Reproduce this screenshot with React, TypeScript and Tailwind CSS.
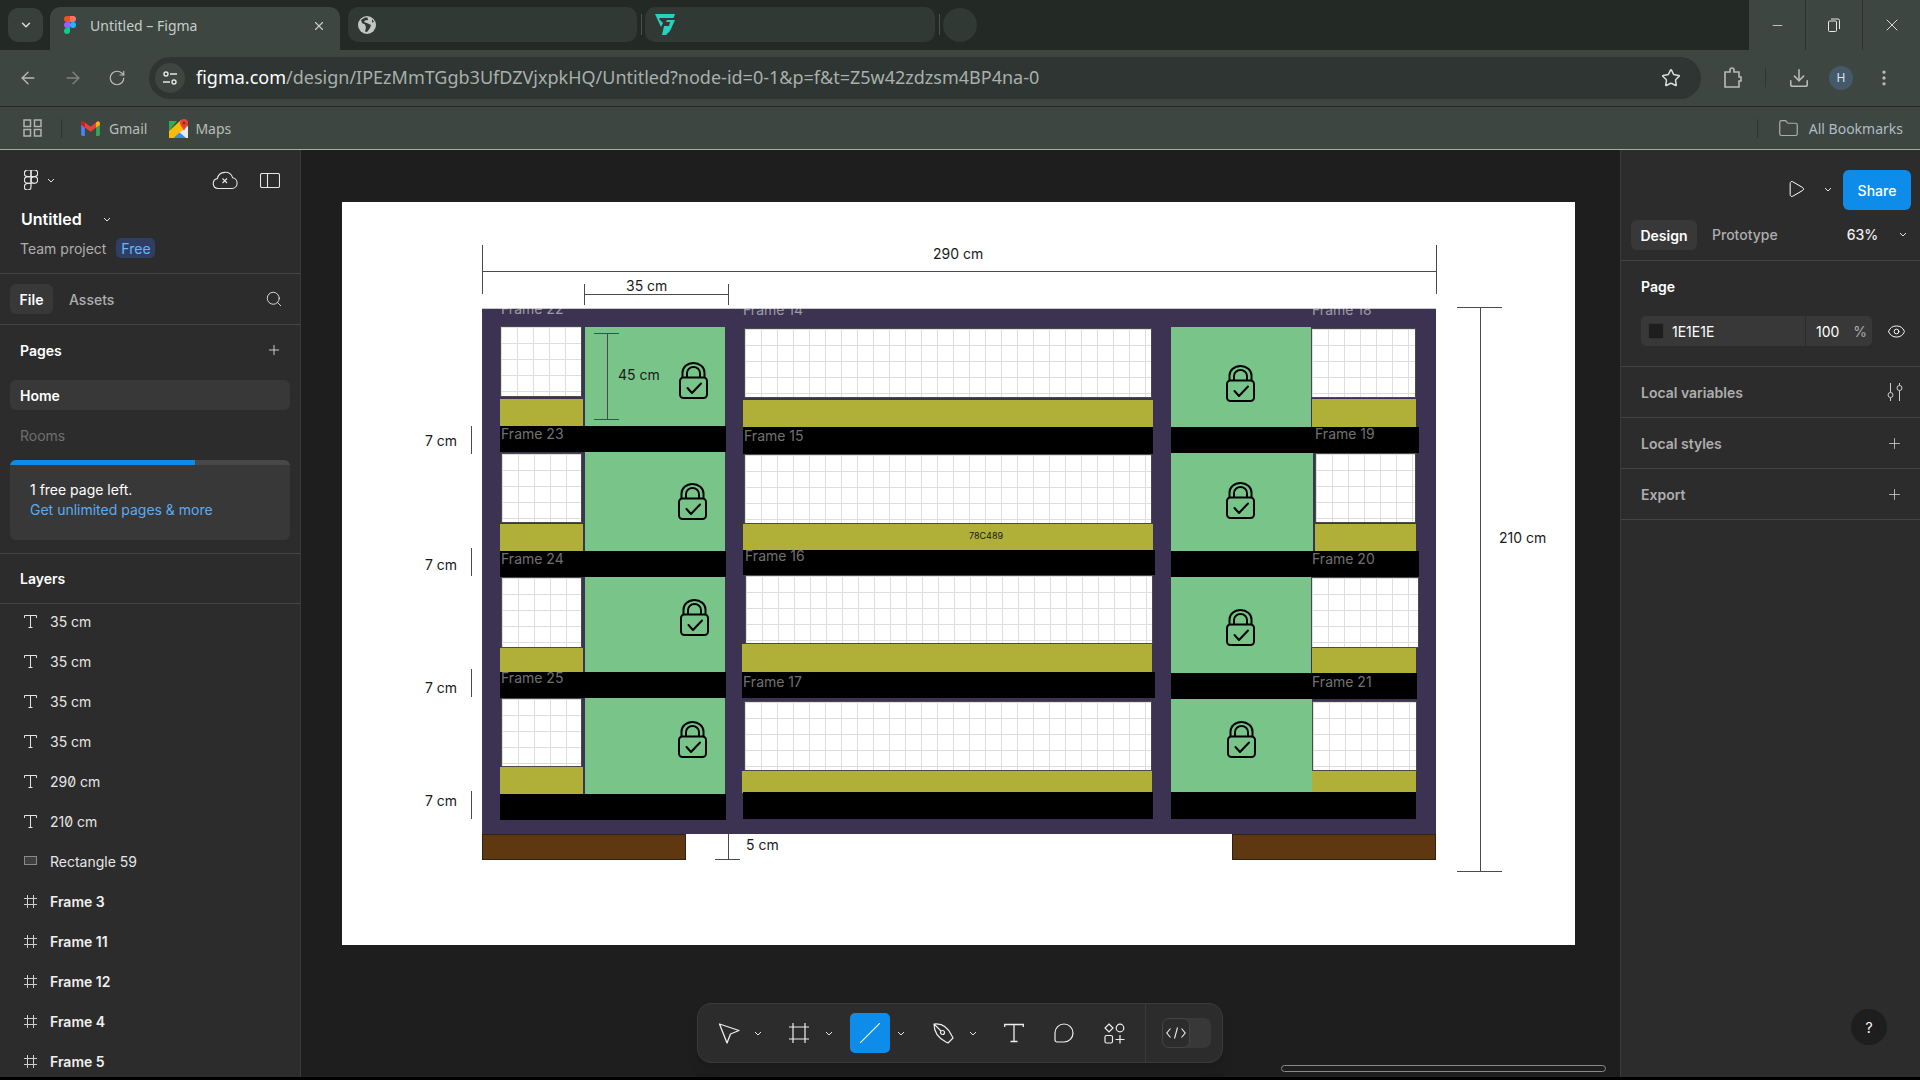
import React from "react";
import {
  ArrowLeft,
  ArrowRight,
  ChevronDown,
  Download,
  EllipsisVertical,
  Eye,
  Folder,
  Minus,
  Play,
  Plus,
  RotateCw,
  Search,
  Star,
  X,
} from "lucide-react";

// the drawing on the canvas is a free layout, so boxes keep the page coordinates of the picture
const BOARD_X = 342;
const BOARD_Y = 203;

type R = [number, number, number, number];

const greens: R[] = [
  [585, 328, 140, 99],
  [585, 453, 140, 99],
  [585, 578, 140, 95],
  [585, 699, 140, 96],
  [1171, 328, 140, 100],
  [1171, 454, 142, 98],
  [1171, 578, 140, 96],
  [1171, 700, 141, 94],
];

const whites: R[] = [
  [500, 327, 82, 71],
  [501, 454, 81, 70],
  [501, 578, 81, 71],
  [501, 699, 81, 69],
  [744, 329, 408, 70],
  [744, 455, 408, 70],
  [745, 576, 408, 69],
  [744, 702, 408, 70],
  [1311, 329, 105, 70],
  [1315, 454, 101, 70],
  [1311, 578, 108, 71],
  [1312, 702, 105, 70],
];

const olives: R[] = [
  [500, 400, 83, 27],
  [500, 525, 83, 28],
  [500, 649, 83, 24],
  [500, 768, 83, 27],
  [743, 401, 410, 27],
  [743, 525, 410, 26],
  [742, 645, 410, 28],
  [742, 772, 410, 22],
  [1312, 400, 104, 28],
  [1315, 525, 101, 27],
  [1312, 649, 104, 25],
  [1312, 772, 104, 22],
];

const blacks: R[] = [
  [500, 427, 226, 26],
  [500, 552, 226, 26],
  [500, 673, 226, 26],
  [500, 795, 226, 26],
  [743, 428, 410, 27],
  [743, 551, 412, 25],
  [742, 673, 413, 26],
  [743, 793, 410, 27],
  [1171, 428, 248, 26],
  [1171, 552, 248, 26],
  [1171, 674, 246, 26],
  [1171, 793, 245, 27],
];

const locks: [number, number][] = [
  [679, 363],
  [678, 484],
  [680, 600],
  [678, 722],
  [1226, 366],
  [1226, 483],
  [1226, 610],
  [1227, 722],
];

const frameLabels: [string, number, number][] = [
  ["Frame 22", 501, 310],
  ["Frame 14", 743, 311],
  ["Frame 18", 1312, 311],
  ["Frame 23", 501, 435],
  ["Frame 24", 501, 560],
  ["Frame 25", 501, 679],
  ["Frame 15", 744, 437],
  ["Frame 16", 745, 557],
  ["Frame 17", 743, 683],
  ["Frame 19", 1315, 435],
  ["Frame 20", 1312, 560],
  ["Frame 21", 1312, 683],
];

const dimLines: R[] = [
  [482, 272, 954, 1],
  [482, 246, 1, 49],
  [1436, 246, 1, 49],
  [584, 295, 144, 1],
  [584, 285, 1, 21],
  [728, 285, 1, 21],
  [607, 334, 1, 86],
  [594, 334, 25, 1],
  [594, 420, 25, 1],
  [471, 427, 1, 28],
  [471, 549, 1, 28],
  [471, 670, 1, 28],
  [471, 792, 1, 28],
  [728, 835, 1, 25],
  [715, 860, 25, 1],
  [1480, 308, 1, 565],
  [1457, 308, 45, 1],
  [1457, 872, 45, 1],
];

const dimLabels: [string, number, number][] = [
  ["290 cm", 933, 255],
  ["35 cm", 626, 287],
  ["45 cm", 618, 376],
  ["7 cm", 425, 442],
  ["7 cm", 425, 566],
  ["7 cm", 425, 689],
  ["7 cm", 425, 802],
  ["5 cm", 746, 846],
  ["210 cm", 1499, 539],
];

const layers = [
  { kind: "text", name: "35 cm" },
  { kind: "text", name: "35 cm" },
  { kind: "text", name: "35 cm" },
  { kind: "text", name: "35 cm" },
  { kind: "text", name: "290 cm" },
  { kind: "text", name: "210 cm" },
  { kind: "rect", name: "Rectangle 59" },
  { kind: "frame", name: "Frame 3" },
  { kind: "frame", name: "Frame 11" },
  { kind: "frame", name: "Frame 12" },
  { kind: "frame", name: "Frame 4" },
  { kind: "frame", name: "Frame 5" },
];

const Box = ({ r, className }: { r: R; className: string }) => (
  <div
    className={`absolute ${className}`}
    style={{ left: r[0] - BOARD_X, top: r[1] - BOARD_Y, width: r[2], height: r[3] }}
  />
);

const Label = ({ text, x, cy, className }: { text: string; x: number; cy: number; className: string }) => (
  <span
    className={`absolute h-5 whitespace-nowrap text-[14px] leading-5 ${className}`}
    style={{ left: x - BOARD_X, top: cy - 10 - BOARD_Y }}
  >
    {text}
  </span>
);

const Lock = ({ x, y }: { x: number; y: number }) => (
  <svg
    className="absolute"
    style={{ left: x - BOARD_X, top: y - BOARD_Y }}
    width="29"
    height="37"
    viewBox="0 0 29 37"
    fill="none"
    stroke="#000"
    strokeWidth="2"
    strokeLinejoin="round"
    strokeLinecap="round"
  >
    <path d="M3.5 15V10.5a11 9.5 0 0 1 22 0V15" />
    <path d="M8 15V11a6.5 6 0 0 1 13 0v4" />
    <rect x="1" y="15.5" width="27" height="20.5" rx="3.5" />
    <path d="M8.5 26l4.5 5 9-9.5" />
  </svg>
);

const Mini = () => (
  <svg width="8" height="5" viewBox="0 0 8 5" fill="none" stroke="#e6e6e6" strokeWidth="1">
    <path d="M1 1l3 3 3-3" />
  </svg>
);

const FigmaMark = ({ size = 20 }: { size?: number }) => (
  <svg width={size * 0.7} height={size} viewBox="0 0 38 57" fill="none" stroke="#e6e6e6" strokeWidth="3.5">
    <path d="M19 28.5a9.5 9.5 0 1 1 19 0 9.5 9.5 0 0 1-19 0z" />
    <path d="M0 47.5A9.5 9.5 0 0 1 9.5 38H19v9.5a9.5 9.5 0 1 1-19 0z" />
    <path d="M19 0v19h9.5a9.5 9.5 0 1 0 0-19H19z" />
    <path d="M0 9.5A9.5 9.5 0 0 0 9.5 19H19V0H9.5A9.5 9.5 0 0 0 0 9.5z" />
    <path d="M0 28.5A9.5 9.5 0 0 0 9.5 38H19V19H9.5A9.5 9.5 0 0 0 0 28.5z" />
  </svg>
);

const FigmaFavicon = () => (
  <svg width="12" height="18" viewBox="0 0 38 57">
    <path fill="#1ABCFE" d="M19 28.5a9.5 9.5 0 1 1 19 0 9.5 9.5 0 0 1-19 0z" />
    <path fill="#0ACF83" d="M0 47.5A9.5 9.5 0 0 1 9.5 38H19v9.5a9.5 9.5 0 1 1-19 0z" />
    <path fill="#FF7262" d="M19 0v19h9.5a9.5 9.5 0 1 0 0-19H19z" />
    <path fill="#F24E1E" d="M0 9.5A9.5 9.5 0 0 0 9.5 19H19V0H9.5A9.5 9.5 0 0 0 0 9.5z" />
    <path fill="#A259FF" d="M0 28.5A9.5 9.5 0 0 0 9.5 38H19V19H9.5A9.5 9.5 0 0 0 0 28.5z" />
  </svg>
);

const GlobeIcon = () => (
  <svg width="18" height="18" viewBox="0 0 18 18">
    <circle cx="9" cy="9" r="9" fill="#c3c7c4" />
    <path fill="#313935" d="M7 1.5L3 4l1 3 3 1.5 1 3-1 4 2 .5 3-4 1-3-3-1.5L6 6l1-1.5 3-.5L9.5 1.5zM14 3l2 3-2 .5z" />
  </svg>
);

const FvLogo = () => (
  <svg width="20" height="21" viewBox="0 0 20 21" fill="#23d3c0">
    <path d="M0 0h20l-1.5 4H5l-1 1 4 4-2 4z" />
    <path d="M7 21l2-9h5l1-4h-4l1-2h8l-5 11-4 4z" />
  </svg>
);

const GmailIcon = () => (
  <svg width="19" height="15" viewBox="0 0 20 16">
    <path fill="#4285F4" d="M0 3h4v13H1.5A1.5 1.5 0 0 1 0 14.500z" />
    <path fill="#34A853" d="M16 3h4v11.500a1.500 1.500 0 0 1-1.500 1.500H16z" />
    <path fill="#EA4335" d="M0 4V2.500C0 .5 2 0 3 .8L10 6l7-5.200c1-.8 3-.3 3 1.700V4l-4 3-6 4.500L4 7z" />
    <path fill="#FBBC04" d="M16 1.500l1-.7c1-.8 3-.3 3 1.700V4l-4 3z" />
    <path fill="#C5221F" d="M0 4V2.500C0 .5 2 0 3 .8l1 .7V7z" />
  </svg>
);

const MapsIcon = () => (
  <svg width="19" height="19" viewBox="0 0 19 19">
    <path fill="#34A853" d="M0 2h8L0 12z" />
    <path fill="#FBBC04" d="M0 12L12 1l7 6L5 19H0z" />
    <path fill="#4285F4" d="M5 19l5.500-5.500L17 19z" />
    <path fill="#e8eaed" d="M10.500 13.500L19 7v12h-2z" />
    <path fill="#EA4335" d="M15 0a4 4 0 0 0-4 4c0 3 3 4.500 4 8 1-3.500 4-5 4-8a4 4 0 0 0-4-4z" />
    <circle cx="15" cy="4" r="1.500" fill="#8e2a20" />
  </svg>
);

const LayerIcon = ({ kind }: { kind: string }) => {
  if (kind === "text") {
    return (
      <svg width="13" height="13" viewBox="0 0 13 13" fill="none" stroke="#e6e6e6" strokeWidth="1">
        <path d="M.5 3V.5h12V3M6.500.5v12M4.500 12.500h4" />
      </svg>
    );
  }
  if (kind === "rect") {
    return (
      <svg width="13" height="10" viewBox="0 0 13 10" fill="#3f3f3f" stroke="#8a8a8a" strokeWidth="1">
        <rect x=".5" y=".5" width="12" height="8" />
      </svg>
    );
  }
  return (
    <svg width="13" height="13" viewBox="0 0 13 13" fill="none" stroke="#cfcfcf" strokeWidth="1">
      <path d="M3.500 0v13M9.500 0v13M0 3.500h13M0 9.500h13" />
    </svg>
  );
};

const ToolChevron = ({ className }: { className: string }) => (
  <span className={className}>
    <Mini />
  </span>
);

const Toolbar = () => (
  <div className="absolute left-[396px] top-[853px] flex h-[60px] w-[526px] items-center rounded-[14px] border border-[#3a3a3a] bg-[#2c2c2c] shadow-lg">
    <svg className="ml-5" width="22" height="22" viewBox="0 0 22 22" fill="none" stroke="#eee" strokeWidth="1.300" strokeLinejoin="round">
      <path d="M1.500 2L21 8.500l-8.500 3.500L9 21z" />
    </svg>
    <ToolChevron className="ml-[14px]" />
    <svg className="ml-[27px]" width="20" height="20" viewBox="0 0 20 20" fill="none" stroke="#eee" strokeWidth="1.200">
      <path d="M4 0v20M16 0v20M0 4h20M0 16h20" />
    </svg>
    <ToolChevron className="ml-4" />
    <div className="ml-[17px] flex size-10 items-center justify-center rounded-[5px] bg-[#0d8ce9]">
      <svg width="20" height="20" viewBox="0 0 20 20" stroke="#fff" strokeWidth="1.100">
        <path d="M0 20L20 0" />
      </svg>
    </div>
    <ToolChevron className="ml-[7px]" />
    <svg className="ml-7" width="21" height="21" viewBox="0 0 21 21" fill="none" stroke="#eee" strokeWidth="1.200" strokeLinejoin="round">
      <path d="M1 1c8-1 14 3 18 12l1 2-5 5-2-1C5 15 1 9 1 1zM1 1l7 7" />
      <circle cx="9.500" cy="9.500" r="2" />
    </svg>
    <ToolChevron className="ml-[15px]" />
    <svg className="ml-[27px]" width="20" height="20" viewBox="0 0 20 20" fill="none" stroke="#eee" strokeWidth="1.300">
      <path d="M.7 4V1.500h18.600V4M10 1.500v17M6.500 18.500h7" />
    </svg>
    <svg className="ml-[30px]" width="20" height="20" viewBox="0 0 20 20" fill="none" stroke="#eee" strokeWidth="1.200">
      <path d="M10 1a9 9 0 0 1 0 18H3a2 2 0 0 1-2-2v-7a9 9 0 0 1 9-9z" />
    </svg>
    <svg className="ml-[30px]" width="21" height="21" viewBox="0 0 21 21" fill="none" stroke="#eee" strokeWidth="1.200">
      <path d="M5 1l4 4-4 4-4-4z" />
      <circle cx="16" cy="5" r="3.800" />
      <rect x="1" y="12.500" width="7.500" height="7.500" rx="1.500" />
      <path d="M16 12v8.500M11.500 16.500h9" />
    </svg>
    <div className="ml-5 h-full w-px bg-[#3a3a3a]" />
    <div className="ml-4 flex h-[30px] w-[49px] rounded-[7px] bg-[#383838]">
      <div className="flex h-[30px] w-7 items-center justify-center rounded-[7px] border border-[#444] bg-[#2c2c2c]">
        <svg width="20" height="12" viewBox="0 0 20 12" fill="none" stroke="#eee" strokeWidth="1.100">
          <path d="M4.500 1.500L.8 6l3.700 4.500M15.500 1.500L19.200 6l-3.700 4.500M11.500.5L8.500 11.500" />
        </svg>
      </div>
    </div>
  </div>
);

const Canvas = () => (
  <main className="relative min-w-0 flex-1 overflow-hidden bg-[#1e1e1e]">
    {/* white frame with the wardrobe sketch */}
    <div className="absolute left-[41px] top-[52px] h-[743px] w-[1233px] bg-white text-black">
      <Box r={[482, 309, 954, 526]} className="bg-[#3b3351] border-t border-[#c8c8c8]" />
      <Box r={[482, 835, 204, 26]} className="bg-[#5f3711] border border-[#2e2116]" />
      <Box r={[1232, 835, 204, 26]} className="bg-[#5f3711] border border-[#2e2116]" />
      {greens.map((r, i) => (
        <Box key={i} r={r} className="bg-[#78c489]" />
      ))}
      {whites.map((r, i) => (
        <Box
          key={i}
          r={r}
          className="border border-[#4a4a4a] bg-white bg-[linear-gradient(to_right,#dedede_1px,transparent_1px),linear-gradient(to_bottom,#dedede_1px,transparent_1px)] bg-[size:16px_16px]"
        />
      ))}
      {olives.map((r, i) => (
        <Box key={i} r={r} className="bg-[#b0af37]" />
      ))}
      {blacks.map((r, i) => (
        <Box key={i} r={r} className="bg-black" />
      ))}
      {/* the top labels are cut off by the purple frame's edge */}
      <div className="absolute left-[140px] top-[106px] h-[12px] w-[954px] overflow-hidden">
        {frameLabels.slice(0, 3).map(([t, x, cy]) => (
          <span
            key={t}
            className="absolute h-5 whitespace-nowrap text-[14px] leading-5 text-white/50"
            style={{ left: x - 482, top: cy - 10 - 309 }}
          >
            {t}
          </span>
        ))}
      </div>
      {frameLabels.slice(3).map(([t, x, cy]) => (
        <Label key={t} text={t} x={x} cy={cy} className="text-white/45" />
      ))}
      {locks.map(([x, y], i) => (
        <Lock key={i} x={x} y={y} />
      ))}
      {dimLines.map((r, i) => (
        <Box key={i} r={r} className="bg-[#4a4a4a]" />
      ))}
      {dimLabels.map(([t, x, cy], i) => (
        <Label key={i} text={t} x={x} cy={cy} className="text-[#1a1a1a]" />
      ))}
      <span
        className="absolute whitespace-nowrap text-[9px] leading-3 text-[#1a1a1a]"
        style={{ left: 969 - BOARD_X, top: 531 - BOARD_Y }}
      >
        78C489
      </span>
    </div>
    <Toolbar />
    <div className="absolute left-[980px] top-[915px] h-[7px] w-[325px] rounded-full border border-[#8a8a8a]" />
  </main>
);

const LeftPanel = () => (
  <aside className="flex w-[301px] shrink-0 flex-col overflow-hidden border-r border-[#3a3a3a] bg-[#2c2c2c] text-[14px] text-white">
    <div className="h-[124px] shrink-0 border-b border-[#444] pl-[20px] pt-[20px]">
      <div className="flex h-5 items-center pr-[20px]">
        <span className="ml-[4px]">
          <FigmaMark />
        </span>
        <span className="ml-[9px]">
          <Mini />
        </span>
        <svg className="ml-auto" width="26" height="20" viewBox="0 0 26 20" fill="none" stroke="#e6e6e6" strokeWidth="1.100">
          <path d="M6 18.500a5 5 0 0 1-.7-9.900 8 8 0 0 1 15.400-.8 5.400 5.400 0 0 1-.7 10.700z" />
          <path d="M10.500 8.500l4.500 4.500M15 8.500L10.500 13" />
        </svg>
        <svg className="ml-[22px]" width="20" height="15" viewBox="0 0 20 15" fill="none" stroke="#e6e6e6" strokeWidth="1.100">
          <rect x=".5" y=".5" width="19" height="14" rx="1.500" />
          <path d="M7.500.5v14" />
        </svg>
      </div>
      <div className="mt-[19px] flex h-5 items-center">
        <span className="ml-px text-[16px] font-semibold">Untitled</span>
        <span className="ml-[21px]">
          <Mini />
        </span>
      </div>
      <div className="mt-[9px] flex h-5 items-center">
        <span className="text-[#aeaeae]">Team project</span>
        <span className="ml-[10px] flex h-5 w-[39px] items-center justify-center rounded-[5px] bg-[#2f3e63] text-[#6bb5f7]">
          Free
        </span>
      </div>
    </div>
    <div className="flex h-[51px] shrink-0 items-center border-b border-[#444] px-[10px]">
      <span className="flex h-[30px] w-[43px] items-center justify-center rounded-[6px] bg-[#383838] font-semibold">File</span>
      <span className="ml-[16px] font-medium text-[#aeaeae]">Assets</span>
      <Search className="ml-auto mr-[7px]" size={18} strokeWidth={1.2} color="#e6e6e6" />
    </div>
    <div className="flex h-[50px] shrink-0 items-center justify-between pl-[20px] pr-[18px]">
      <span className="font-semibold">Pages</span>
      <Plus size={16} strokeWidth={1.1} />
    </div>
    <div className="mx-[10px] mt-[5px] flex h-[30px] shrink-0 items-center rounded-[6px] bg-[#383838] pl-[10px] font-semibold">Home</div>
    <div className="flex h-[50px] shrink-0 items-center pl-[20px] text-[#6f6f6f]">Rooms</div>
    <div className="mx-[10px] h-[80px] shrink-0 overflow-hidden rounded-[6px] bg-[#383838]">
      <div className="h-[5px] bg-[#484848]">
        <div className="h-full w-[185px] bg-[#0d8ce9]" />
      </div>
      <div className="pl-[20px] pt-[15px] leading-5">
        <p>1 free page left.</p>
        <p className="text-[#5cabf0]">Get unlimited pages &amp; more</p>
      </div>
    </div>
    <div className="mt-[13px] flex h-[51px] shrink-0 items-center border-b border-t border-[#444] pl-[20px] font-semibold">Layers</div>
    <div className="flex flex-col gap-2 pt-px">
      {layers.map((l, i) => (
        <div key={i} className="flex h-8 shrink-0 items-center">
          <span className="ml-[24px] flex w-[26px] shrink-0">
            <LayerIcon kind={l.kind} />
          </span>
          <span className={l.kind === "frame" ? "font-semibold text-[#f0f0f0]" : "text-[#e6e6e6] slashed-zero"}>{l.name}</span>
        </div>
      ))}
    </div>
  </aside>
);

const sections = ["Local variables", "Local styles", "Export"];

const RightPanel = () => (
  <aside className="relative flex w-[300px] shrink-0 flex-col overflow-hidden border-l border-[#3a3a3a] bg-[#2c2c2c] text-[14px] text-white">
    <div className="flex h-[60px] shrink-0 items-end justify-end pr-[9px]">
      <Play className="mb-[11px]" size={20} strokeWidth={1.2} />
      <span className="mb-[18px] ml-[18px]">
        <Mini />
      </span>
      <button className="ml-[11px] h-10 w-[68px] rounded-[6px] bg-[#0d8ce9] font-medium">Share</button>
    </div>
    <div className="flex h-[51px] shrink-0 items-start border-b border-[#444] pl-[10px] pt-[10px]">
      <span className="flex h-[30px] w-[66px] items-center justify-center rounded-[6px] bg-[#383838] font-semibold">Design</span>
      <span className="ml-[15px] h-[30px] font-medium leading-[30px] text-[#aeaeae]">Prototype</span>
      <span className="ml-[69px] h-[30px] font-medium leading-[30px] text-[#eee]">63%</span>
      <span className="ml-[21px] mt-[12px]">
        <Mini />
      </span>
    </div>
    <div className="h-[106px] shrink-0 border-b border-[#444] pl-5">
      <div className="flex h-[50px] items-center font-semibold">Page</div>
      <div className="mt-[5px] flex items-center">
        <div className="flex h-[30px] w-[231px] items-center rounded-[5px] bg-[#383838]">
          <span className="ml-[7px] size-[16px] rounded-[2px] border border-[#333] bg-[#1e1e1e]" />
          <span className="ml-2 w-[133px]">1E1E1E</span>
          <span className="h-full w-px bg-[#2c2c2c]" />
          <span className="ml-[10px]">100</span>
          <span className="ml-[14px] text-[#aeaeae]">%</span>
        </div>
        <Eye className="ml-[15px]" size={19} strokeWidth={1.2} />
      </div>
    </div>
    {sections.map((s, i) => (
      <div key={s} className="flex h-[51px] shrink-0 items-center justify-between border-b border-[#444] pl-5 pr-[17px] font-semibold text-[#aeaeae]">
        {s}
        {i === 0 ? (
          <svg width="16" height="18" viewBox="0 0 16 18" fill="none" stroke="#cfcfcf" strokeWidth="1">
            <circle cx="3.500" cy="12" r="2.500" />
            <circle cx="12.500" cy="5" r="2.500" />
            <path d="M3.500 0v9.500M3.500 14.500V18M12.500 0v2.500M12.500 7.500V18" />
          </svg>
        ) : (
          <Plus size={17} strokeWidth={1.1} color="#d8d8d8" />
        )}
      </div>
    ))}
    <div className="absolute left-[230px] top-[859px] flex size-9 items-center justify-center rounded-full bg-[#1e1e1e]">?</div>
  </aside>
);

const ChromeBars = () => (
  <header className="shrink-0 bg-[#3d4641] text-[14px] [font-family:'Noto_Sans',sans-serif]">
    <div className="flex h-[50px] bg-[#232925] pt-[7px]">
      <div className="ml-2 mt-px flex h-[34px] w-[35px] items-center justify-center rounded-[10px] bg-[#38403c]">
        <ChevronDown size={14} strokeWidth={2.5} color="#d8dbd9" />
      </div>
      <div className="ml-[7px] flex h-[43px] w-[290px] items-start rounded-t-[10px] bg-[#3d4641] pt-[9px] text-[#c8cdc9]">
        <span className="ml-[14px] flex">
          <FigmaFavicon />
        </span>
        <span className="ml-[14px] text-[14px] leading-[20px]">Untitled – Figma</span>
        <X className="ml-auto mr-[14px] mt-[3px]" size={14} color="#c8cdc9" />
      </div>
      <div className="ml-[8px] flex h-[35px] w-[289px] items-center rounded-[10px] bg-[#313935] pl-[10px]">
        <GlobeIcon />
      </div>
      <div className="ml-1 mt-[7px] h-[21px] w-px bg-[#4a524e]" />
      <div className="ml-[3px] flex h-[35px] w-[290px] items-center rounded-[10px] bg-[#313935] pl-[10px]">
        <FvLogo />
      </div>
      <div className="ml-1 mt-[7px] h-[21px] w-px bg-[#4a524e]" />
      <div className="ml-[3px] mt-px size-[34px] rounded-full bg-[#313935]" />
      <div className="-mt-[7px] ml-auto flex h-[50px] w-[171px] items-center bg-[#3d4641] text-[#e8e8e8]">
        <div className="flex h-full w-[57px] items-center justify-center border-r border-[#2c322f]">
          <Minus size={15} strokeWidth={1.2} />
        </div>
        <div className="flex h-full w-[57px] items-center justify-center border-r border-[#2c322f]">
          <svg width="12" height="14" viewBox="0 0 12 14" fill="none" stroke="#e8e8e8" strokeWidth="1">
            <rect x=".5" y="3" width="8" height="10.500" rx="1" />
            <path d="M3 1h7a1.500 1.500 0 0 1 1.500 1.500V11" />
          </svg>
        </div>
        <div className="flex h-full flex-1 items-center justify-center">
          <X size={20} strokeWidth={1.1} />
        </div>
      </div>
    </div>
    <div className="flex h-[57px] items-center border-b border-[#232925] pb-px">
      <ArrowLeft className="ml-[18px]" size={20} strokeWidth={1.6} color="#b7bcb9" />
      <ArrowRight className="ml-[25px]" size={20} strokeWidth={1.6} color="#7e8582" />
      <RotateCw className="ml-[25px]" size={18} strokeWidth={1.6} color="#b7bcb9" />
      <div className="ml-[23px] flex h-[42px] w-[1552px] items-center rounded-full bg-[#2e3533] pl-[6px] pr-[20px]">
        <span className="flex size-[30px] items-center justify-center rounded-full bg-[#3d4641]">
          <svg width="16" height="16" viewBox="0 0 16 16" fill="none" stroke="#e4e6e5" strokeWidth="1.400">
            <circle cx="4" cy="4" r="2" />
            <circle cx="12" cy="12" r="2" />
            <path d="M8 4h7M1 12h7" />
          </svg>
        </span>
        <span className="ml-[11px] whitespace-nowrap text-[18px] text-[#a9b0ab]">
          <span className="text-white">figma.com</span>/design/IPEzMmTGgb3UfDZVjxpkHQ/Untitled?node-id=0-1&amp;p=f&amp;t=Z5w42zdzsm4BP4na-0
        </span>
        <Star className="ml-auto" size={20} strokeWidth={1.8} color="#d8dbd9" />
      </div>
      <svg className="ml-[22px]" width="20" height="22" viewBox="0 0 20 22" fill="none" stroke="#b7bcb9" strokeWidth="1.600">
        <path d="M2 5h5V3a2 2 0 0 1 4 0v2h5v5h2v4h-2v6H2z" />
      </svg>
      <div className="ml-[22px] h-[19px] w-px bg-[#2e3533]" />
      <Download className="ml-[22px]" size={22} strokeWidth={1.7} color="#b7bcb9" />
      <span className="ml-[19px] flex size-[24px] items-center justify-center rounded-full bg-[#46596a] text-[12px] text-[#dfe4e7]">H</span>
      <EllipsisVertical className="ml-[21px]" size={20} strokeWidth={2} color="#b7bcb9" />
    </div>
    <div className="flex h-[42px] items-center text-[#b8bdb9]">
      <svg className="ml-[23px]" width="19" height="18" viewBox="0 0 19 18" fill="#3d4641" stroke="#b0b5b2" strokeWidth="1.500">
        <rect x="1" y="1" width="6.500" height="6.500" />
        <rect x="11.500" y="1" width="6.500" height="6.500" />
        <rect x="1" y="10.500" width="6.500" height="6.500" />
        <rect x="11.500" y="10.500" width="6.500" height="6.500" />
      </svg>
      <div className="ml-[19px] h-[19px] w-px bg-[#2e3533]" />
      <span className="ml-[19px] flex">
        <GmailIcon />
      </span>
      <span className="ml-[9px]">Gmail</span>
      <span className="ml-[22px] flex">
        <MapsIcon />
      </span>
      <span className="ml-[7px]">Maps</span>
      <div className="ml-auto h-[19px] w-px bg-[#2e3533]" />
      <Folder className="ml-[20px]" size={21} strokeWidth={1.4} color="#a9b0ab" />
      <span className="ml-[10px] mr-[17px] text-[#afbcc4]">All Bookmarks</span>
    </div>
  </header>
);

export default function App() {
  return (
    <div className="flex h-screen w-screen flex-col overflow-hidden bg-black [font-family:Inter,sans-serif]">
      <ChromeBars />
      <div className="h-px shrink-0 bg-[#a8aca9]" />
      <div className="flex min-h-0 flex-1">
        <LeftPanel />
        <Canvas />
        <RightPanel />
      </div>
      <div className="h-[3px] shrink-0 bg-black" />
    </div>
  );
}
